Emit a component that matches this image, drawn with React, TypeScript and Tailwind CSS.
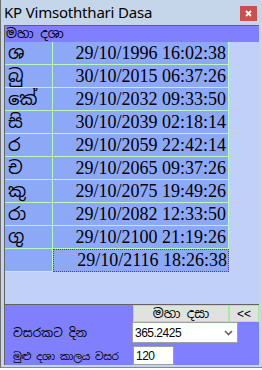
const si = { fontFamily: '"Noto Sans Sinhala", "Iskoola Pota", "Noto Sans", sans-serif' };

const rows = [
  { p: "ශ", d: "29/10/1996 16:02:38" },
  { p: "බු", d: "30/10/2015 06:37:26" },
  { p: "කේ", d: "29/10/2032 09:33:50" },
  { p: "සි", d: "30/10/2039 02:18:14" },
  { p: "ර", d: "29/10/2059 22:42:14" },
  { p: "ච", d: "29/10/2065 09:37:26" },
  { p: "කු", d: "29/10/2075 19:49:26" },
  { p: "රා", d: "29/10/2082 12:33:50" },
  { p: "ගු", d: "29/10/2100 21:19:26" },
  { p: "", d: "29/10/2116 18:26:38" },
];

export default function App() {
  return (
    <div className="w-[262px] h-[370px] bg-white overflow-hidden">
      <div className="w-[262px] h-[368px] bg-[#c6d6ea] border-l border-[#6e6e6e] border-b border-b-[#7a8aa0] flex flex-col">
        {/* Title bar */}
        <div className="h-[25px] flex items-center justify-between pl-[3px] pr-[5px]">
          <span className="text-[15px] tracking-[-0.2px] text-black" style={{ fontFamily: '"Noto Sans", "Open Sans", sans-serif' }}>
            KP Vimsoththari Dasa
          </span>
          <div className="w-[17px] h-[15px] bg-[#c75050] flex items-center justify-center mt-[2px]">
            <svg width="7" height="7" viewBox="0 0 7 7">
              <path d="M1 1 L6 6 M6 1 L1 6" stroke="white" strokeWidth="1.8" />
            </svg>
          </div>
        </div>

        {/* Client area */}
        <div className="ml-[3px] mr-[3px] flex flex-col flex-1">
          <div className="border-t border-[#646464] border-l border-b bg-[#c0d0f8] flex flex-col">
            <div className="h-[16px] bg-[#8080ff] text-[13px] leading-[16px] pl-[1px] text-black whitespace-nowrap overflow-hidden" style={si}>
              මහා දශා
            </div>
            <div className="flex flex-col">
              {rows.map((r, i) => (
                <div key={i} className="flex h-[23px]">
                  <div
                    className="w-[48px] bg-[#8ea8f8] border-r border-b border-[#b8f8b8] text-[18px] leading-[22px] pl-[3px] text-black overflow-hidden"
                    style={si}
                  >
                    {r.p}
                  </div>
                  <div
                    className={
                      i === rows.length - 1
                        ? "w-[176px] bg-[#8ea8f8] border border-dotted border-[#505030] text-[18px] leading-[21px] text-right pr-[1px] text-black"
                        : "w-[176px] bg-[#8ea8f8] border-r border-b border-[#b8f8b8] text-[18px] leading-[22px] text-right pr-[2px] text-black"
                    }
                    style={{ fontFamily: '"Liberation Serif", serif' }}
                  >
                    {r.d}
                  </div>
                </div>
              ))}
            </div>
            <div className="h-[32px]" />
          </div>

          {/* Bottom panel */}
          <div className="bg-[#8080ff] flex flex-col h-[60px] border-l border-[#646464]">
            <div className="flex pl-[128px] h-[17px]">
              <div
                className="w-[96px] h-[17px] bg-[#e1e1e1] border border-[#a8e8a8] flex items-center justify-center text-[13px] text-black whitespace-nowrap overflow-hidden"
                style={si}
              >
                මහා දසා
              </div>
              <div
                className="w-[30px] h-[17px] bg-[#e1e1e1] border border-[#a8e8a8] flex items-center justify-center text-[12px] text-black"
                style={{ fontFamily: '"Liberation Sans", sans-serif' }}
              >
                &lt;&lt;
              </div>
            </div>
            <div className="flex items-center h-[21px]">
              <div className="w-[127px] pl-[8px] text-[12px] leading-[16px] text-black whitespace-nowrap" style={si}>
                වසරකට දින
              </div>
              <div className="w-[106px] h-[21px] bg-white border border-[#a0a0a0] flex items-center justify-between pl-[2px] pr-[4px]">
                <span className="text-[12px] tracking-[-0.5px] text-black" style={{ fontFamily: '"Liberation Sans", sans-serif' }}>
                  365.2425
                </span>
                <svg width="9" height="6" viewBox="0 0 9 6">
                  <path d="M1 1 L4.5 4.5 L8 1" stroke="#606060" strokeWidth="1.6" fill="none" />
                </svg>
              </div>
            </div>
            <div className="flex items-center h-[22px] pt-[3px]">
              <div className="w-[128px] pl-[8px] text-[10.5px] tracking-[-0.3px] leading-[16px] text-black whitespace-nowrap overflow-hidden" style={si}>
                මුළු දශා කාලය වසර
              </div>
              <div className="w-[41px] h-[19px] bg-white border border-[#a0a0a0] flex items-center pl-[2px]">
                <span className="text-[12px] tracking-[-0.5px] text-black" style={{ fontFamily: '"Liberation Sans", sans-serif' }}>
                  120
                </span>
              </div>
            </div>
          </div>
        </div>
      </div>
    </div>
  );
}
